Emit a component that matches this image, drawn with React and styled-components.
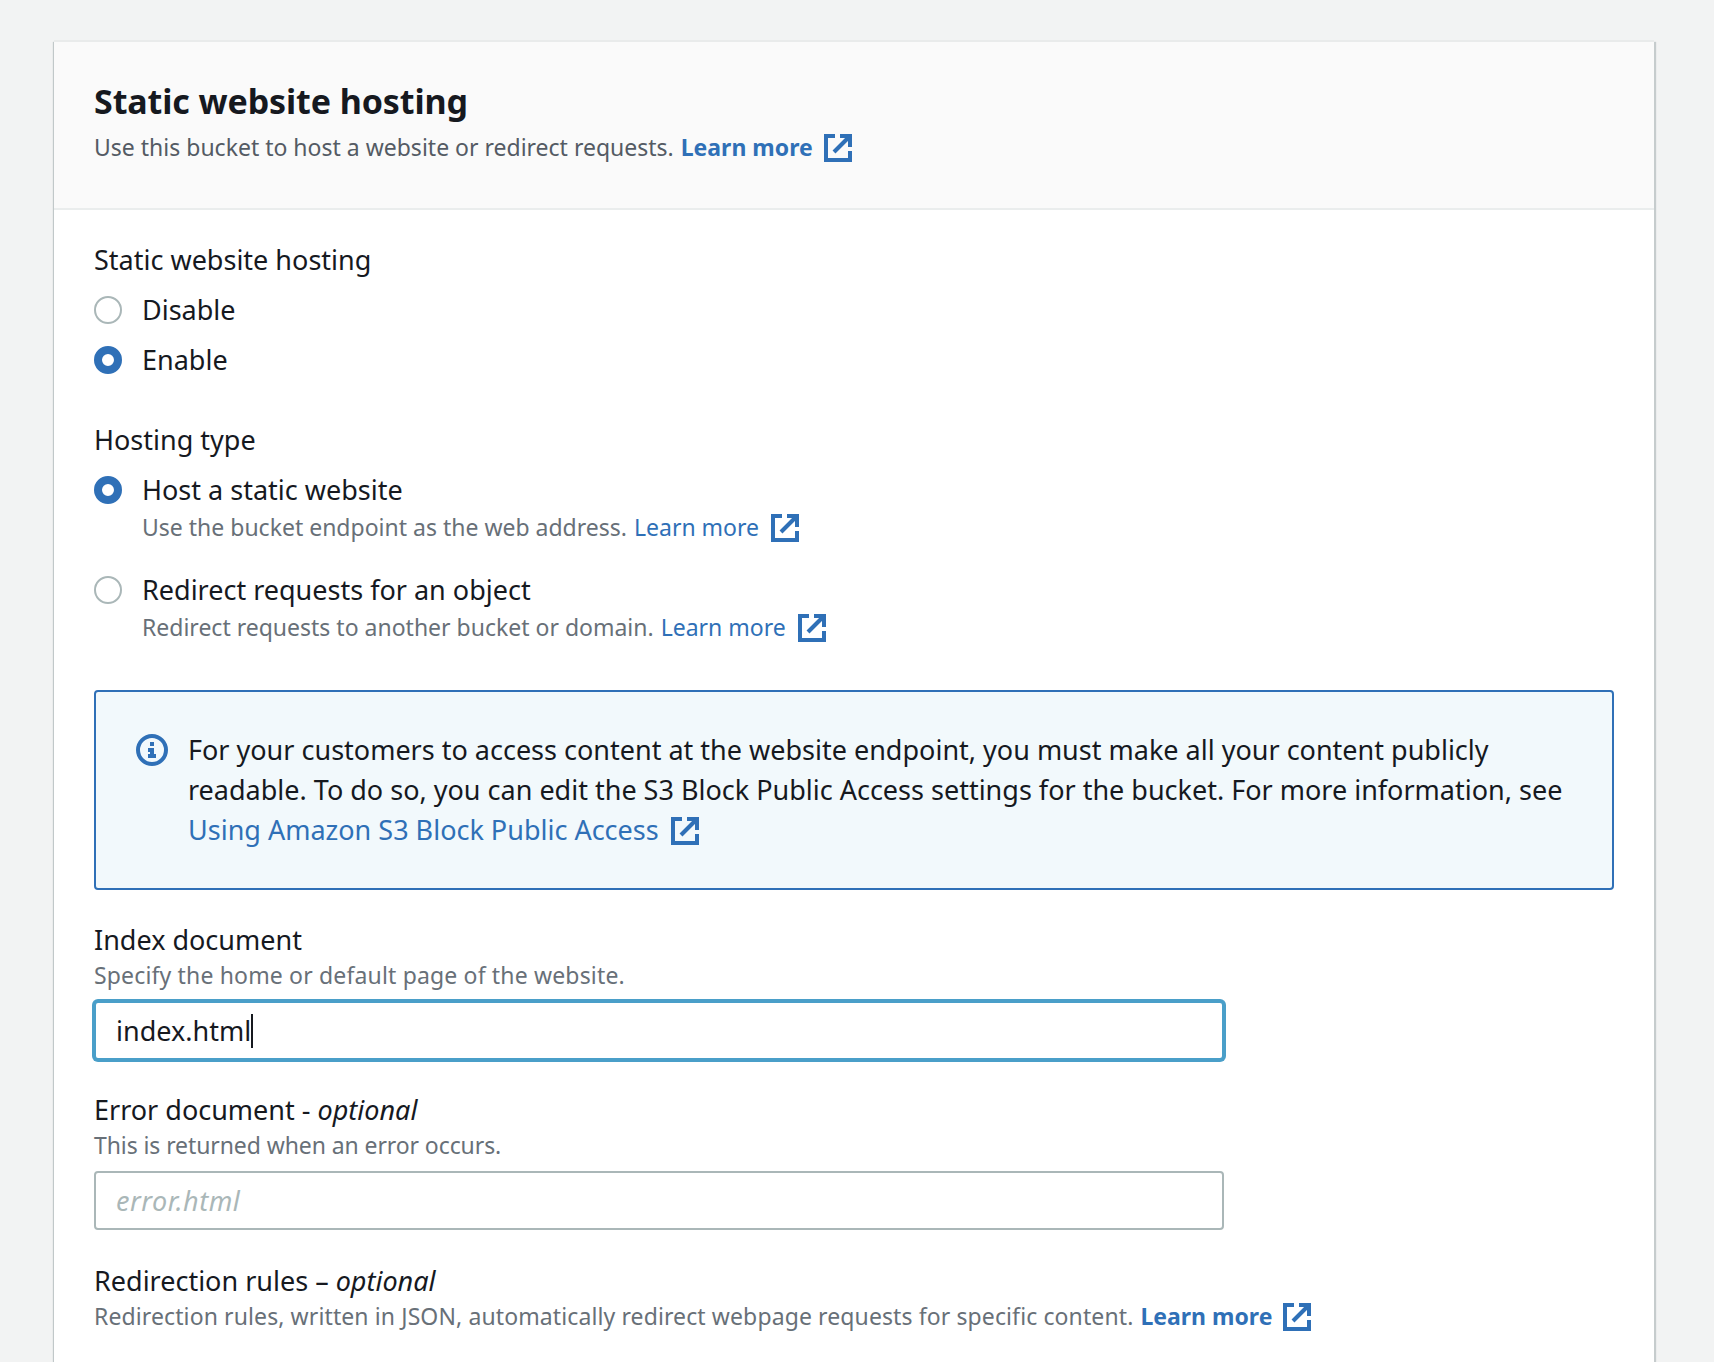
import React from "react";
import styled, { createGlobalStyle } from "styled-components";

const Global = createGlobalStyle`
  html, body { margin: 0; padding: 0; background: #f2f3f3; }
  body { font-family: "Noto Sans", "Open Sans", sans-serif; color: #16191f; }
  * { box-sizing: border-box; }
`;
const Page = styled.div`height: 1362px; overflow: hidden; padding: 42px 60px 0 54px; background: #f2f3f3;`;
const Card = styled.section`height: 1400px; background: #fff; box-shadow: 0 -2px 0 #e9ebeb, 2px 0 1px rgba(0,28,36,.18), -1px 0 1px rgba(0,28,36,.2);`;
const Header = styled.header`height: 168px; padding: 39px 40px 0; background: #fafafa; border-bottom: 2px solid #eaeded;`;
const Title = styled.h2`margin: 0; font-size: 34px; line-height: 40px; font-weight: 700; letter-spacing: -.1px;`;
const Description = styled.p`margin: 6px 0 0; font-size: 23px; line-height: 40px; color: #545b64; display: flex; align-items: center;`;
const Body = styled.div`padding: 30px 40px 0;`;
const Label = styled.div`font-size: 27px; line-height: 40px; em { font-style: italic; }`;
const FieldLabel = styled(Label)`line-height: 35px;`;
const RadioGroup = styled.div`display: flex; flex-direction: column; margin-top: ${p => p.$top}px; margin-bottom: ${p => p.$bottom}px;`;
const RadioRow = styled.div`display: grid; grid-template-columns: 28px 1fr; column-gap: 20px; align-items: start; margin-bottom: ${p => p.$gap}px;`;
const Radio = styled.span`width: 28px; height: 28px; margin-top: 6px; border-radius: 50%;
  border: ${p => p.$on ? "8px solid #2f70b7" : "2px solid #aab7b8"}; background: #fff;`;
const RadioText = styled.span`font-size: 27px; line-height: 40px;`;
const Hint = styled.div`grid-column: 2; font-size: 23px; line-height: 36px; color: #687078; display: flex; align-items: center; letter-spacing: ${p => p.$track ?? 0}px;`;
const RadioHint = styled(Hint)`margin: -1px 0 1px;`;
const Link = styled.a`color: #2f70b7; text-decoration: none; margin-left: ${p => p.$left ?? 7}px; font-weight: ${p => p.$bold ? 700 : 400}; letter-spacing: 0;`;
const IconWrap = styled.svg`width: 32px; height: 32px; flex: none; margin: 2px 0 0 ${p => p.$left ?? 10}px; fill: none; stroke: #2f70b7; stroke-width: 2;`;
const Alert = styled.div`display: flex; gap: 20px; height: 200px; padding: 38px 36px 38px 40px; margin-bottom: 32px; border: 2px solid #2f70b7; border-radius: 4px; background: #f2f9fc; font-size: 27px; line-height: 40px;`;
const AlertIcon = styled.svg`width: 32px; height: 32px; flex: none; margin-top: 4px; fill: none; stroke: #2f70b7; stroke-width: 2;`;
const AlertText = styled.div`flex: 1;`;
const InlineLink = styled.div`display: flex; align-items: center;`;
const Field = styled.div`margin-bottom: ${p => p.$gap}px;`;
const InputBox = styled.div`width: 1130px; height: 59px; margin-top: 8px; padding: 0 20px; display: flex; align-items: center; font-size: 27px; border-radius: 4px; background: #fff;
  border: 2px solid ${p => p.$focus ? "#4a9fc9" : "#aab7b8"}; box-shadow: ${p => p.$focus ? "0 0 0 2px #4a9fc9" : "none"};`;
const Caret = styled.span`width: 2px; height: 34px; background: #16191f;`;
const Placeholder = styled.input`width: 100%; border: 0; outline: 0; padding: 0; background: transparent; font: italic 27px "Noto Sans", sans-serif; letter-spacing: .5px; &::placeholder { color: #aab7b8; opacity: 1; }`;

const External = ({ left }) => (
  <IconWrap viewBox="0 0 16 16" $left={left}>
    <path d="M14 7.5V2H9" /><path d="M14 2 6 10" /><path d="M6.5 2H2v12h12V9.5" />
  </IconWrap>
);

export default function App() {
  return (
    <>
      <Global />
      <Page>
        <Card>
          <Header>
            <Title>Static website hosting</Title>
            <Description>Use this bucket to host a website or redirect requests.<Link $bold href="#">Learn more</Link><External left={9} /></Description>
          </Header>
          <Body>
            <Label>Static website hosting</Label>
            <RadioGroup $top={10} $bottom={40}>
              <RadioRow $gap={10}><Radio /><RadioText>Disable</RadioText></RadioRow>
              <RadioRow $gap={0}><Radio $on /><RadioText>Enable</RadioText></RadioRow>
            </RadioGroup>
            <Label>Hosting type</Label>
            <RadioGroup $top={10} $bottom={44}>
              <RadioRow $gap={24}>
                <Radio $on /><RadioText>Host a static website</RadioText>
                <RadioHint>Use the bucket endpoint as the web address.<Link href="#">Learn more</Link><External /></RadioHint>
              </RadioRow>
              <RadioRow $gap={0}>
                <Radio /><RadioText>Redirect requests for an object</RadioText>
                <RadioHint>Redirect requests to another bucket or domain.<Link href="#">Learn more</Link><External /></RadioHint>
              </RadioRow>
            </RadioGroup>
            <Alert>
              <AlertIcon viewBox="0 0 16 16">
                <circle cx="8" cy="8" r="7" /><path d="M8 11V8H6" /><path d="M10 11H6" /><path d="M7.99 5H8v.01h-.01z" />
              </AlertIcon>
              <AlertText>
                For your customers to access content at the website endpoint, you must make all your content publicly readable. To do so, you can edit the S3 Block Public Access settings for the bucket. For more information, see
                <InlineLink><Link $left={0} href="#">Using Amazon S3 Block Public Access</Link><External /></InlineLink>
              </AlertText>
            </Alert>
            <Field $gap={32}>
              <FieldLabel>Index document</FieldLabel>
              <Hint $track={.16}>Specify the home or default page of the website.</Hint>
              <InputBox $focus>index.html<Caret /></InputBox>
            </Field>
            <Field $gap={33}>
              <FieldLabel>Error document - <em>optional</em></FieldLabel>
              <Hint $track={-.09}>This is returned when an error occurs.</Hint>
              <InputBox><Placeholder readOnly placeholder="error.html" /></InputBox>
            </Field>
            <Field $gap={0}>
              <FieldLabel>Redirection rules – <em>optional</em></FieldLabel>
              <Hint $track={.11}>Redirection rules, written in JSON, automatically redirect webpage requests for specific content.<Link $bold href="#">Learn more</Link><External left={9} /></Hint>
            </Field>
          </Body>
        </Card>
      </Page>
    </>
  );
}
